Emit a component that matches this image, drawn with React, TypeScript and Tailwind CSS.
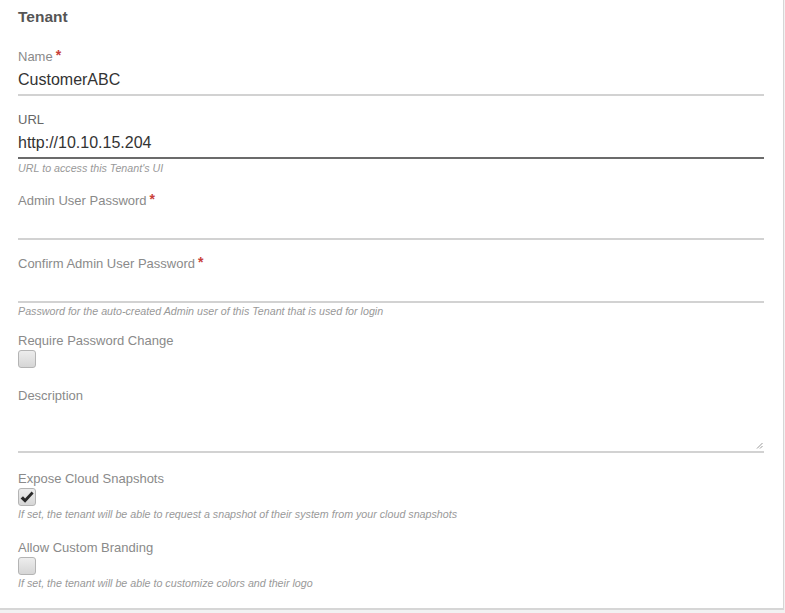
import type { ReactNode } from 'react'

const font = { fontFamily: '"Liberation Sans", Arial, sans-serif' }

function Req() {
  return <span className="ml-[3px] inline-block align-top text-[14px] font-bold leading-[12px] text-[#c9403a]">*</span>
}

function Label({ children, className = '' }: { children: ReactNode; className?: string }) {
  return <div className={`h-4 text-[13px] leading-4 text-[#8a8a8a] ${className}`}>{children}</div>
}

function Help({ children }: { children: ReactNode }) {
  return <div className="h-3 text-[10.7px] italic leading-3 text-[#999]">{children}</div>
}

function TextInput({ value, focused, type = 'text' }: { value?: string; focused?: boolean; type?: string }) {
  return (
    <input
      type={type}
      defaultValue={value}
      readOnly
      className={`block h-[31px] w-full border-b-2 bg-transparent pt-[1px] text-base leading-[29px] text-[#333] outline-none ${
        focused ? 'border-[#6b6b6b]' : 'border-[#d2d2d2]'
      }`}
    />
  )
}

function Checkbox({ checked }: { checked?: boolean }) {
  return (
    <div className="mt-[1px] flex h-[18px] w-[18px] items-center justify-center rounded-[3px] border border-[#b4b4b4] bg-gradient-to-b from-[#ededed] to-[#d6d6d6]">
      {checked && (
        <svg width="14" height="13" viewBox="0 0 14 13">
          <path d="M0.6 7.4 L3 5.2 L5.1 7.6 L11.6 0.6 L13.6 2.4 L5.1 11.8 Z" fill="#2a2a2a" />
        </svg>
      )}
    </div>
  )
}

export default function App() {
  return (
    <div className="h-[613px] w-[785px] bg-[#f2f2f2]" style={font}>
      <div className="flex h-[610px] w-[784px] flex-col border-r border-b-2 border-[#d6d6d6] bg-white px-[18px] pr-[19px]">
        <div className="mt-[7px] h-5 text-[15.5px] font-bold leading-5 text-[#555]">Tenant</div>

        {/* Name */}
        <Label className="mt-[22px]">
          Name<Req />
        </Label>
        <TextInput value="CustomerABC" />

        {/* URL */}
        <Label className="mt-4 text-[#666]">URL</Label>
        <TextInput value="http://10.10.15.204" focused />
        <div className="mt-[3px]">
          <Help>URL to access this Tenant's UI</Help>
        </div>

        {/* Admin password */}
        <Label className="mt-[19px]">
          Admin User Password<Req />
        </Label>
        <TextInput type="password" />

        <Label className="mt-4">
          Confirm Admin User Password<Req />
        </Label>
        <TextInput type="password" />
        <div className="mt-[2px]">
          <Help>Password for the auto-created Admin user of this Tenant that is used for login</Help>
        </div>

        <Label className="mt-4">Require Password Change</Label>
        <Checkbox />

        <Label className="mt-[20px]">Description</Label>
        <div className="relative h-[49px] border-b-2 border-[#d2d2d2]">
          <svg className="absolute right-[1px] bottom-[2px]" width="7" height="7" viewBox="0 0 7 7">
            <path d="M1 6.5 L6.5 1 M4 6.5 L6.5 4" stroke="#999" strokeWidth="1" />
          </svg>
        </div>

        <Label className="mt-[18px]">Expose Cloud Snapshots</Label>
        <Checkbox checked />
        <div className="mt-[2px]">
          <Help>If set, the tenant will be able to request a snapshot of their system from your cloud snapshots</Help>
        </div>

        <Label className="mt-[20px]">Allow Custom Branding</Label>
        <Checkbox />
        <div className="mt-[2px]">
          <Help>If set, the tenant will be able to customize colors and their logo</Help>
        </div>
      </div>
    </div>
  )
}
